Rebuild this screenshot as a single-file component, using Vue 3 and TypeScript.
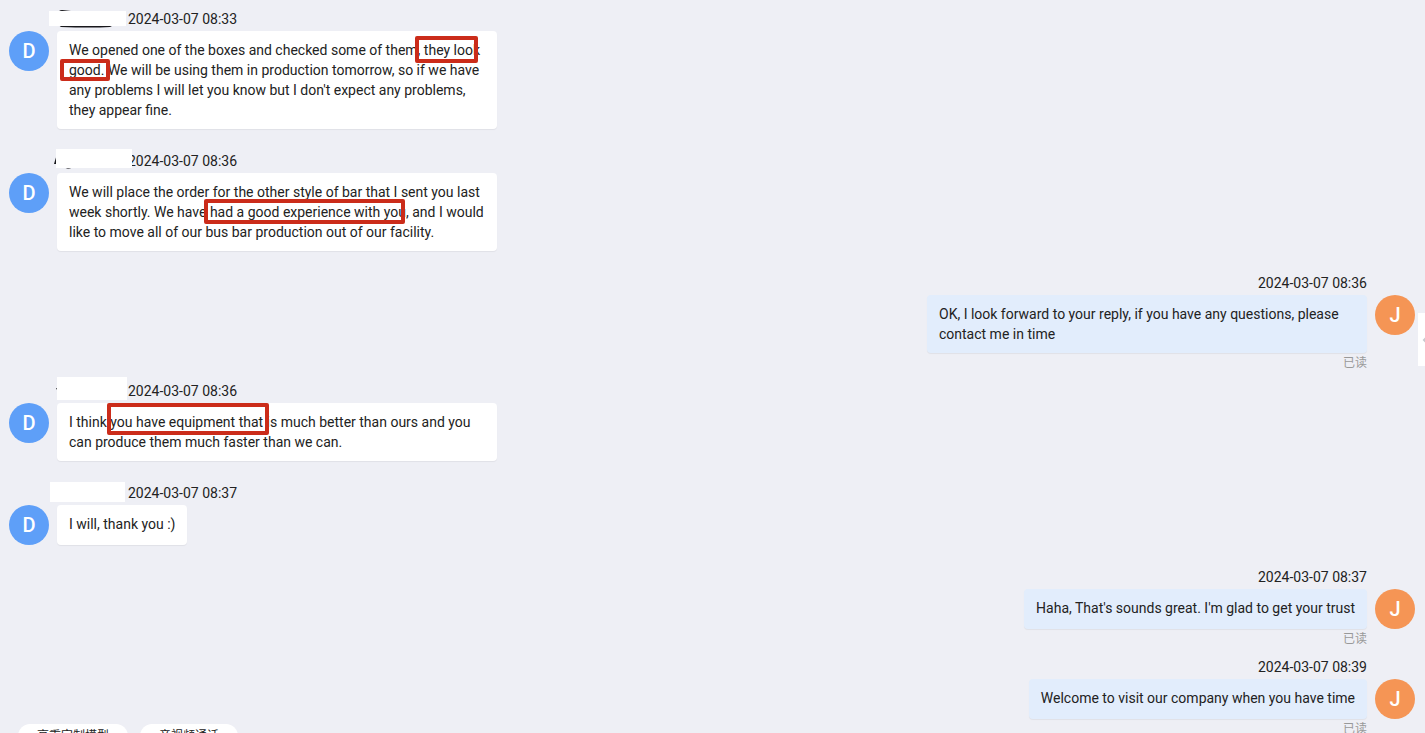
<script setup lang="ts">
interface Message {
  id: string
  from: 'customer' | 'seller'
  initial: string
  time: string
  text: string
  marks?: string[]
}

const messages: Message[] = [
  {
    id: 'm1', from: 'customer', initial: 'D', time: '2024-03-07 08:33',
    text: "We opened one of the boxes and checked some of them, they look good. We will be using them in production tomorrow, so if we have any problems I will let you know but I don't expect any problems, they appear fine.",
    marks: ['look', 'good'],
  },
  {
    id: 'm2', from: 'customer', initial: 'D', time: '2024-03-07 08:36',
    text: 'We will place the order for the other style of bar that I sent you last week shortly. We have had a good experience with you, and I would like to move all of our bus bar production out of our facility.',
    marks: ['experience'],
  },
  {
    id: 'm3', from: 'seller', initial: 'J', time: '2024-03-07 08:36',
    text: 'OK, I look forward to your reply, if you have any questions, please contact me in time',
  },
  {
    id: 'm4', from: 'customer', initial: 'D', time: '2024-03-07 08:36',
    text: 'I think you have equipment that is much better than ours and you can produce them much faster than we can.',
    marks: ['equipment'],
  },
  { id: 'm5', from: 'customer', initial: 'D', time: '2024-03-07 08:37', text: 'I will, thank you :)' },
  {
    id: 'm6', from: 'seller', initial: 'J', time: '2024-03-07 08:37',
    text: "Haha, That's sounds great. I'm glad to get your trust",
  },
  {
    id: 'm7', from: 'seller', initial: 'J', time: '2024-03-07 08:39',
    text: 'Welcome to visit our company when you have time',
  },
]

const actions: string[] = ['高重定制模型', '音视频通话']
</script>

<template>
  <main class="chat">
    <article v-for="m in messages" :key="m.id" class="message" :class="[m.from, m.id]">
      <div class="avatar">{{ m.initial }}</div>
      <div class="body">
        <header class="meta">
          <template v-if="m.from === 'customer'">
            <svg v-if="m.id === 'm1'" class="trace" viewBox="0 0 90 24" aria-hidden="true">
              <path d="M8 3Q8 1 11 1L20 2V4H8Z" fill="#17171b" />
              <path d="M6 15H65L59 18Q40 19 10 18Z" fill="#17171b" />
            </svg>
            <svg v-else-if="m.id === 'm2'" class="trace" viewBox="0 0 90 24" aria-hidden="true">
              <path d="M6 3L3 13H6Z" fill="#17171b" />
              <path d="M13 16Q17 19 22 16" fill="none" stroke="#55555a" />
            </svg>
            <svg v-else-if="m.id === 'm4'" class="trace" viewBox="0 0 90 24" aria-hidden="true">
              <path d="M5 7H8V9H6Z" fill="#333" />
            </svg>
            <span class="redacted"></span>
          </template>
          <time>{{ m.time }}</time>
        </header>
        <div class="bubble">
          <p>{{ m.text }}</p>
          <span v-for="k in m.marks" :key="k" class="mark" :class="k"></span>
        </div>
        <div v-if="m.from === 'seller'" class="status">已读</div>
      </div>
    </article>

    <nav class="actions">
      <button v-for="a in actions" :key="a" type="button">{{ a }}</button>
    </nav>
    <button class="drawer" type="button" aria-label="Open panel">
      <svg width="8" height="12" viewBox="0 0 8 12" aria-hidden="true">
        <path d="M5 3L2 6L5 9M2 6H8" fill="none" stroke="#c8cacf" stroke-width="2" />
      </svg>
    </button>
  </main>
</template>

<style>
body {
  margin: 0;
  background: #eeeff5;
}
</style>

<style scoped>
.chat {
  position: relative;
  box-sizing: border-box;
  height: 100vh;
  overflow: hidden;
  padding: 9px 10px 0 9px;
  background: #eeeff5;
  color: #222;
  font: 14px/20px Roboto, "Noto Sans CJK SC", sans-serif;
}
.message {
  display: flex;
  align-items: flex-start;
  gap: 8px;
  margin-bottom: 22px;
}
.seller {
  flex-direction: row-reverse;
  margin-bottom: 8px;
}
.avatar {
  flex: none;
  width: 40px;
  height: 40px;
  margin-top: 22px;
  border-radius: 50%;
  background: #5e9ff8;
  color: #fff;
  font-size: 20px;
  font-weight: 500;
  line-height: 40px;
  text-align: center;
}
.seller .avatar {
  background: #f59555;
}
.body {
  display: flex;
  flex-direction: column;
  align-items: flex-start;
  max-width: 440px;
}
.seller .body {
  align-items: flex-end;
}
.meta {
  position: relative;
  height: 22px;
}
.customer .meta {
  padding-left: 71px;
}
.meta time {
  white-space: nowrap;
}
.trace {
  position: absolute;
  left: -6px;
  top: 0;
  width: 90px;
  height: 24px;
}
.redacted {
  position: absolute;
  left: -8px;
  top: 2px;
  width: 77px;
  height: 15px;
  background: #fff;
}
.m2 .redacted {
  left: -1px;
  top: -2px;
  width: 76px;
  height: 19px;
}
.m4 .redacted {
  left: 0;
  top: -4px;
  width: 70px;
  height: 23px;
}
.m5 .redacted {
  left: -7px;
  top: -1px;
  width: 75px;
  height: 20px;
}
.bubble {
  position: relative;
  box-sizing: border-box;
  min-height: 40px;
  padding: 9px 12px;
  border-radius: 4px;
  background: #fff;
  box-shadow: 0 1px 1px rgba(0, 0, 0, 0.06);
}
.seller .bubble {
  background: #e2edfc;
}
.bubble p {
  margin: 0;
}
.status {
  height: 20px;
  color: #999;
  font-size: 12px;
}
.mark {
  position: absolute;
  box-sizing: border-box;
  border: 4px solid #cb2c1a;
  border-radius: 2px;
}
.look {
  left: 358px;
  top: 5px;
  width: 63px;
  height: 27px;
}
.good {
  left: 3px;
  top: 28px;
  width: 50px;
  height: 22px;
}
.experience {
  left: 147px;
  top: 26px;
  width: 201px;
  height: 25px;
}
.equipment {
  left: 50px;
  top: 0;
  width: 162px;
  height: 32px;
}
.actions {
  position: absolute;
  left: 18px;
  bottom: -15px;
  display: flex;
  gap: 12px;
}
.actions button {
  height: 24px;
  padding: 0 19px;
  border: 0;
  border-radius: 12px;
  background: #fff;
  color: #222;
  font: 12px/24px Roboto, "Noto Sans CJK SC", sans-serif;
}
.drawer {
  position: absolute;
  right: 0;
  top: 313px;
  display: flex;
  align-items: center;
  justify-content: flex-start;
  width: 7px;
  height: 53px;
  padding: 0;
  border: 0;
  background: #fff;
  overflow: hidden;
}
.drawer svg {
  flex: none;
  margin-left: 4px;
}
</style>
